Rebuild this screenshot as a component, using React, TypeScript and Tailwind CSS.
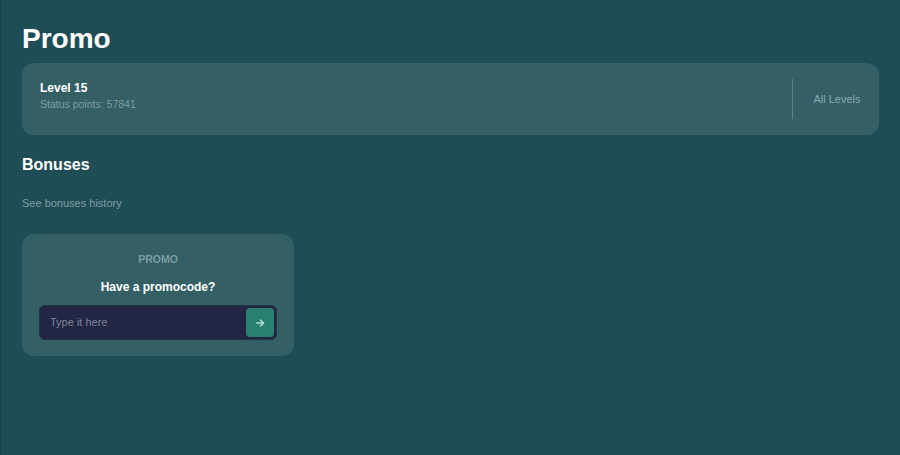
import React from 'react';

function ArrowRight() {
  return (
    <svg width="12" height="12" viewBox="0 0 24 24" fill="none" stroke="currentColor" strokeWidth="3" strokeLinecap="round" strokeLinejoin="round">
      <path d="M5 12h14" />
      <path d="M13 6l6 6-6 6" />
    </svg>
  );
}

function LevelCard() {
  return (
    <div className="flex items-center h-[72px] rounded-xl bg-[#335f65] pl-[18px]">
      <div className="flex-1 flex flex-col mb-[7px]">
        <span className="text-[12px] font-bold leading-4 text-white">Level 15</span>
        <span className="text-[10.5px] leading-4 text-[#7d9ea1]">Status points: 57841</span>
      </div>
      <div className="w-px h-10 bg-[#5a8489]" />
      <span className="w-[86px] text-center text-[11px] text-[#8aa9ac] pl-[2px]">All Levels</span>
    </div>
  );
}

function PromoCard() {
  return (
    <div className="w-[272px] h-[122px] rounded-xl bg-[#335f65] flex flex-col items-center pt-[17px] px-[17px]">
      <span className="text-[10.5px] font-bold leading-4 text-[#7d9ea1]">PROMO</span>
      <span className="mt-[12px] text-[12px] font-bold leading-4 text-white">Have a promocode?</span>
      <div className="mt-[10px] w-full h-[35px] rounded-md bg-[#232545] border border-[#1f3640] flex items-center pl-[10px] pr-[2px]">
        <input
          className="flex-1 bg-transparent outline-none text-[11px] text-white placeholder:text-[#7f8398]"
          placeholder="Type it here"
        />
        <button className="w-[28px] h-[29px] rounded bg-[#2a8070] text-[#b9ddd4] flex items-center justify-center">
          <ArrowRight />
        </button>
      </div>
    </div>
  );
}

export default function App() {
  return (
    <div className="w-[900px] h-[455px] bg-[#1f4d56] border-l border-[#18404a] font-['Liberation_Sans',Arial,sans-serif] pl-[21px] pr-[21px]">
      <h1 className="pt-[23px] text-[28px] font-bold leading-8 text-white">Promo</h1>
      <div className="mt-[8px]">
        <LevelCard />
      </div>
      <h2 className="mt-[20px] text-[16px] font-bold leading-5 text-white">Bonuses</h2>
      <p className="mt-[20px] text-[11px] leading-4 text-[#7d9ea1]">See bonuses history</p>
      <div className="mt-[23px]">
        <PromoCard />
      </div>
    </div>
  );
}
